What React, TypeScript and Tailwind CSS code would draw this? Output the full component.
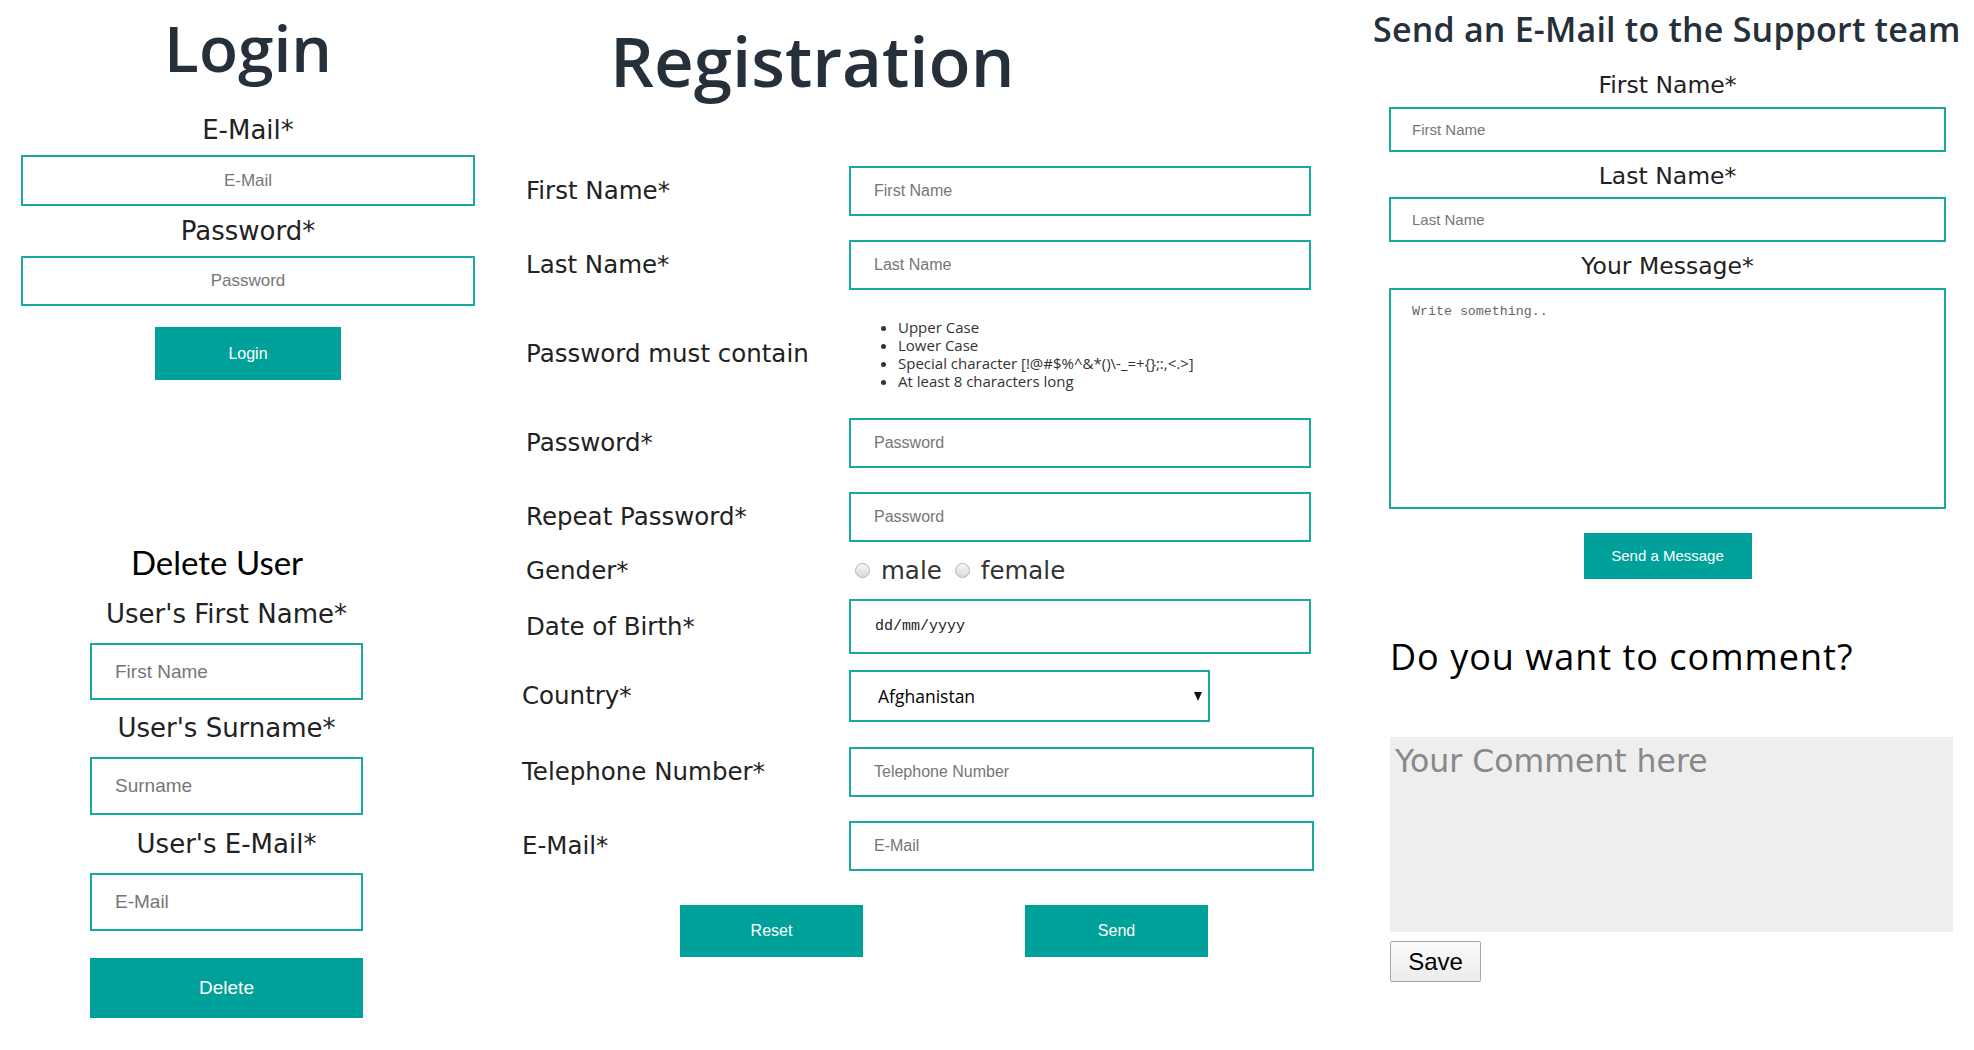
import { ReactNode } from "react";

const labelFont = "font-['DejaVu_Sans',sans-serif] text-[#222]";
const titleFont = "font-['Open_Sans',sans-serif] font-semibold text-[#25303b]";
const field = "block border-2 border-[#1ba89f] bg-white text-[#333] outline-none";
const arial = "font-['Liberation_Sans',Arial,sans-serif] placeholder:text-[#767676]";
const tealBtn =
  "bg-[#00a19a] text-white font-['Liberation_Sans',Arial,sans-serif] flex items-center justify-center";

function Row({
  label,
  h,
  mt = "",
  shift = "",
  children,
}: {
  label: string;
  h: string;
  mt?: string;
  shift?: string;
  children: ReactNode;
}) {
  return (
    <div className={`flex items-center ${h} ${mt}`}>
      <span className={`${labelFont} w-[323px] shrink-0 text-[24.5px] leading-[30px] ${shift}`}>
        {label}
      </span>
      {children}
    </div>
  );
}

function Radio({ text }: { text: string }) {
  return (
    <label className="flex items-center">
      <span className="w-[15px] h-[15px] rounded-full border border-[#b4b4b4] bg-gradient-to-b from-[#f6f6f6] to-[#d9d9d9]" />
      <span className={`${labelFont} ml-[11px] text-[24.5px] leading-[30px] text-[#333]`}>{text}</span>
    </label>
  );
}

function LoginColumn() {
  return (
    <div className="w-[510px] shrink-0">
      {/* Login */}
      <section className="ml-[21px] w-[454px] flex flex-col items-center">
        <h1 className={`${titleFont} pt-[16px] text-[64px] leading-[64px]`}>Login</h1>
        <span className={`${labelFont} mt-[35px] text-[26px] leading-[30px]`}>E-Mail*</span>
        <input className={`${field} ${arial} mt-[10px] w-full h-[51px] text-center text-[17px]`} placeholder="E-Mail" />
        <span className={`${labelFont} mt-[10px] text-[26px] leading-[30px]`}>Password*</span>
        <input
          type="password"
          className={`${field} ${arial} mt-[10px] w-full h-[50px] text-center text-[17px]`}
          placeholder="Password"
        />
        <button className={`${tealBtn} mt-[21px] w-[186px] h-[53px] text-[16px]`}>Login</button>
      </section>

      {/* Delete User */}
      <section className="mt-[162px] ml-[90px] w-[273px] flex flex-col items-center">
        <h2 className="font-['Lato',sans-serif] text-[33px] leading-[40px] text-black pr-[19px]">Delete User</h2>
        <span className={`${labelFont} mt-[17px] text-[26px] leading-[30px]`}>User's First Name*</span>
        <input className={`${field} ${arial} mt-[14px] w-full h-[57px] pl-[23px] text-[19px]`} placeholder="First Name" />
        <span className={`${labelFont} mt-[13px] text-[26px] leading-[30px]`}>User's Surname*</span>
        <input className={`${field} ${arial} mt-[14px] w-full h-[58px] pl-[23px] text-[19px]`} placeholder="Surname" />
        <span className={`${labelFont} mt-[14px] text-[26px] leading-[30px]`}>User's E-Mail*</span>
        <input className={`${field} ${arial} mt-[14px] w-full h-[58px] pl-[23px] text-[19px]`} placeholder="E-Mail" />
        <button className={`${tealBtn} mt-[27px] w-full h-[60px] text-[19px]`}>Delete</button>
      </section>
    </div>
  );
}

function RegistrationColumn() {
  const inputCls = `${field} ${arial} h-full pl-[23px] text-[16px]`;
  return (
    <div className="w-[850px] shrink-0">
      <h1 className={`${titleFont} pt-[24px] pl-[100px] text-[69px] leading-[72px]`}>Registration</h1>

      <div className="mt-[70px] pl-[16px] flex flex-col">
        <Row label="First Name*" h="h-[50px]">
          <input className={`${inputCls} w-[462px]`} placeholder="First Name" />
        </Row>
        <Row label="Last Name*" h="h-[50px]" mt="mt-[24px]">
          <input className={`${inputCls} w-[462px]`} placeholder="Last Name" />
        </Row>
        <Row label="Password must contain" h="h-[128px]">
          <ul className="list-disc pl-[49px] font-['Open_Sans',sans-serif] text-[15px] leading-[18px] text-[#333]">
            <li>Upper Case</li>
            <li>Lower Case</li>
            <li>Special character [!@#$%^&amp;*()\-_=+{"{}"};:,&lt;.&gt;]</li>
            <li>At least 8 characters long</li>
          </ul>
        </Row>
        <Row label="Password*" h="h-[50px]">
          <input type="password" className={`${inputCls} w-[462px]`} placeholder="Password" />
        </Row>
        <Row label="Repeat Password*" h="h-[50px]" mt="mt-[24px]">
          <input type="password" className={`${inputCls} w-[462px]`} placeholder="Password" />
        </Row>
        <Row label="Gender*" h="h-[57px]">
          <div className="flex items-center gap-[13px] pl-[6px]">
            <Radio text="male" />
            <Radio text="female" />
          </div>
        </Row>
        <Row label="Date of Birth*" h="h-[55px]">
          <input
            className={`${field} h-full w-[462px] pl-[24px] text-[15px] font-['Liberation_Mono',monospace] placeholder:text-[#222]`}
            placeholder="dd/mm/yyyy"
          />
        </Row>
        <Row label="Country*" h="h-[52px]" mt="mt-[16px]" shift="-ml-[4px] mr-[4px]">
          <div className="relative w-[361px] h-full">
            <select className="appearance-none w-full h-full border-2 border-[#1ba89f] bg-white pl-[27px] font-['Open_Sans',sans-serif] text-[17.5px] text-black outline-none">
              <option>Afghanistan</option>
            </select>
            <svg className="absolute right-[8px] top-[22px] pointer-events-none" width="8" height="9" viewBox="0 0 8 9">
              <path d="M0 0 H8 L4 9 Z" fill="#111" />
            </svg>
          </div>
        </Row>
        <Row label="Telephone Number*" h="h-[50px]" mt="mt-[25px]" shift="-ml-[4px] mr-[4px]">
          <input className={`${inputCls} w-[465px]`} placeholder="Telephone Number" />
        </Row>
        <Row label="E-Mail*" h="h-[50px]" mt="mt-[24px]" shift="-ml-[4px] mr-[4px]">
          <input className={`${inputCls} w-[465px]`} placeholder="E-Mail" />
        </Row>
      </div>

      <div className="mt-[34px] pl-[170px] flex gap-[162px]">
        <button className={`${tealBtn} w-[183px] h-[52px] text-[16px]`}>Reset</button>
        <button className={`${tealBtn} w-[183px] h-[52px] text-[16px]`}>Send</button>
      </div>
    </div>
  );
}

function SupportColumn() {
  return (
    <div className="w-[614px] shrink-0">
      <h2 className={`${titleFont} pt-[9px] pl-[13px] text-[34px] leading-[40px] tracking-[0.2px] whitespace-nowrap`}>
        Send an E-Mail to the Support team
      </h2>

      <section className="ml-[29px] w-[557px] flex flex-col items-center">
        <span className={`${labelFont} mt-[22px] text-[23.5px] leading-[28px]`}>First Name*</span>
        <input className={`${field} ${arial} mt-[8px] w-full h-[45px] pl-[21px] text-[15px]`} placeholder="First Name" />
        <span className={`${labelFont} mt-[10px] text-[23.5px] leading-[28px]`}>Last Name*</span>
        <input className={`${field} ${arial} mt-[7px] w-full h-[45px] pl-[21px] text-[15px]`} placeholder="Last Name" />
        <span className={`${labelFont} mt-[10px] text-[23.5px] leading-[28px]`}>Your Message*</span>
        <textarea
          className={`${field} mt-[8px] w-full h-[221px] pl-[21px] pt-[12px] resize-none font-['Liberation_Mono',monospace] text-[13.3px] placeholder:text-[#666]`}
          placeholder="Write something.."
        />
        <button className={`${tealBtn} mt-[24px] w-[168px] h-[46px] text-[15px]`}>Send a Message</button>
      </section>

      <section className="ml-[30px] w-[563px] flex flex-col items-start">
        <h2 className="mt-[58px] font-['Open_Sans',sans-serif] font-medium text-[36px] leading-[40px] tracking-[1px] text-black">
          Do you want to comment?
        </h2>
        <textarea
          className="mt-[60px] w-full h-[195px] bg-[#eeeeee] pl-[5px] pt-[6px] resize-none outline-none font-['DejaVu_Sans',sans-serif] text-[31.5px] leading-[36px] placeholder:text-[#888]"
          placeholder="Your Comment here"
        />
        <button className="mt-[9px] w-[91px] h-[41px] border border-[#a6a6a6] rounded-[2px] bg-gradient-to-b from-[#fbfbfb] to-[#ececec] font-['Liberation_Sans',Arial,sans-serif] text-[24px] text-black">
          Save
        </button>
      </section>
    </div>
  );
}

export default function App() {
  return (
    <div className="w-[1974px] h-[1050px] bg-white flex overflow-hidden">
      <LoginColumn />
      <RegistrationColumn />
      <SupportColumn />
    </div>
  );
}
